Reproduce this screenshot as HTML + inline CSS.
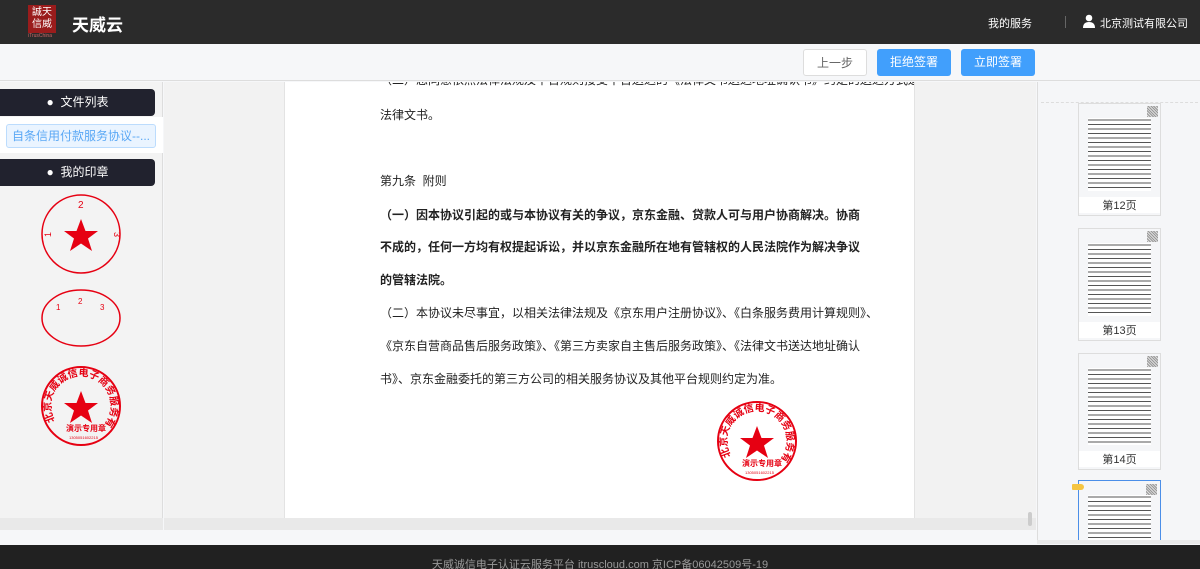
<!DOCTYPE html>
<html><head><meta charset="utf-8">
<style>
*{margin:0;padding:0;box-sizing:border-box}
html,body{width:1200px;height:569px;overflow:hidden}
body{background:#f6f7f9;font-family:"Liberation Sans","Noto Sans CJK SC",sans-serif;position:relative}
.abs{position:absolute}
#hdr{left:0;top:0;width:1200px;height:44px;background:#2b2b2b}
#tb{left:0;top:44px;width:1200px;height:37px;background:#f6f7f9;border-bottom:1px solid #ddd}
.btn{position:absolute;top:49px;height:27px;border-radius:3px;font-size:12px;line-height:27px;text-align:center}
#left{left:0;top:82px;width:163px;height:436px;background:#f3f3f3;border-right:1px solid #ddd}
.nav{position:absolute;left:0;width:155px;height:27px;background:#21222e;border-radius:0 4px 4px 0;color:#fff;font-size:12px;line-height:27px;text-align:center}
#mid{left:164px;top:82px;width:872px;height:436px;background:#f2f2f2}
#page{left:284px;top:82px;width:631px;height:436px;background:#fff;border-left:1px solid #e3e3e3;border-right:1px solid #e3e3e3;overflow:hidden}
.p{position:absolute;left:95px;font-size:12px;color:#222;white-space:nowrap}
.b{font-weight:bold}
#right{left:1037px;top:82px;width:163px;height:458px;background:#f5f6f8;border-left:1px solid #ddd;overflow:hidden}
.th{position:absolute;left:40px;width:83px;background:#fff;border:1px solid #ddd;
background-image:repeating-linear-gradient(#fff 0,#fff 2px,#555 2px,#555 3px,#fff 3px,#fff 4.5px);background-clip:content-box;padding:14px 9px 24px 9px}
.qr{position:absolute;right:2px;top:2px;width:11px;height:11px;background:repeating-linear-gradient(45deg,#999 0 1px,#ddd 1px 2px)}
.pl{position:absolute;bottom:2px;left:0;width:100%;text-align:center;font-size:11px;color:#333;background:#fff}
#foot{left:0;top:545px;width:1200px;height:24px;background:#212121;color:#999;font-size:11px;text-align:center;line-height:40px;overflow:hidden}
.sb{position:absolute;height:12px;background:#e9e9e9}
</style></head><body>
<div id="hdr" class="abs">
  <div class="abs" style="left:28px;top:5px;width:28px;height:28px;background:#9a1c1c;color:#fff;font-size:10px;line-height:12px;text-align:center;padding-top:2px">誠天<br>信威</div>
  <div class="abs" style="left:28px;top:33px;width:30px;font-size:5px;color:#c66">iTrusChina</div>
  <div class="abs" style="left:72px;top:11px;color:#fff;font-size:17px;font-weight:bold">天威云</div>
  <div class="abs" style="left:988px;top:15px;color:#fff;font-size:11px">我的服务</div>
  <div class="abs" style="left:1065px;top:16px;width:1px;height:12px;background:#666"></div>
  <svg class="abs" style="left:1083px;top:14px" width="12" height="14" viewBox="0 0 12 14"><circle cx="6" cy="4" r="3.3" fill="#fff"/><path d="M0 14 Q0 8 6 8 Q12 8 12 14Z" fill="#fff"/></svg>
  <div class="abs" style="left:1100px;top:15px;color:#fff;font-size:11px">北京测试有限公司</div>
</div>
<div id="tb" class="abs"></div>
<div class="btn" style="left:803px;width:64px;background:#fff;border:1px solid #ddd;color:#666">上一步</div>
<div class="btn" style="left:877px;width:74px;background:#419ffc;color:#fff">拒绝签署</div>
<div class="btn" style="left:961px;width:74px;background:#419ffc;color:#fff">立即签署</div>

<div id="left" class="abs">
  <div class="nav" style="top:7px">●&nbsp;&nbsp;文件列表</div>
  <div class="abs" style="left:0;top:35px;width:163px;height:36px;background:#fff"></div>
  <div class="abs" style="left:6px;top:42px;width:150px;height:24px;background:#eaf4ff;border:1px solid #bcdcfd;border-radius:3px;color:#5aa8f5;font-size:12px;line-height:22px;text-align:center">自条信用付款服务协议--...</div>
  <div class="nav" style="top:77px">●&nbsp;&nbsp;我的印章</div>
  <svg class="abs" style="left:40px;top:111px" width="82" height="82" viewBox="0 0 82 82"><circle cx="41" cy="41" r="39" fill="none" stroke="#e60012" stroke-width="1.5"/><polygon points="41,26 45.5,38 58,38 48,45.5 52,58 41,50.5 30,58 34,45.5 24,38 36.5,38" fill="#e60012"/><text x="38" y="15" font-size="10" fill="#e60012">2</text><text x="5" y="44" font-size="9" fill="#e60012" transform="rotate(-90 8 41)">1</text><text x="72" y="41" font-size="9" fill="#e60012" transform="rotate(90 74 41)">3</text></svg>
  <svg class="abs" style="left:40px;top:207px" width="82" height="60" viewBox="0 0 82 60"><ellipse cx="41" cy="29" rx="39" ry="28" fill="none" stroke="#e60012" stroke-width="1.5"/><text x="38" y="15" font-size="8" fill="#e60012">2</text><text x="16" y="21" font-size="8" fill="#e60012">1</text><text x="60" y="21" font-size="8" fill="#e60012">3</text></svg>
  <svg class="abs" style="left:40px;top:283px" width="82" height="82" viewBox="0 0 82 82"><defs><path id="arc1" d="M15 56 A30 30 0 1 1 67 56"/></defs><circle cx="41" cy="41" r="39" fill="none" stroke="#e60012" stroke-width="2"/><text font-size="10" font-weight="bold" fill="#e60012"><textPath href="#arc1">北京天威诚信电子商务服务有限公司</textPath></text><polygon points="41,26 45.5,38 58,38 48,45.5 52,58 41,50.5 30,58 34,45.5 24,38 36.5,38" fill="#e60012"/><text x="26" y="66" font-size="8" font-weight="bold" fill="#e60012">演示专用章</text><text x="29" y="74" font-size="4" fill="#e60012">1305051602215</text></svg>
</div>
<div class="sb" style="left:0;top:518px;width:163px"></div>
<div id="mid" class="abs"></div>
<div class="sb" style="left:164px;top:518px;width:872px"></div>
<div class="abs" style="left:1028px;top:512px;width:4px;height:14px;background:#ccc;border-radius:2px"></div>
<div id="page" class="abs">
  <div class="p" style="top:-11px">（二）您同意依照法律法规及平台规则接受平台送达的《法律文书送达地址确认书》约定的送达方式送达</div>
  <div class="p" style="top:24px">法律文书。</div>
  <div class="p" style="top:90px">第九条&nbsp;&nbsp;附则</div>
  <div class="p b" style="top:124px">（一）因本协议引起的或与本协议有关的争议，京东金融、贷款人可与用户协商解决。协商</div>
  <div class="p b" style="top:156px">不成的，任何一方均有权提起诉讼，并以京东金融所在地有管辖权的人民法院作为解决争议</div>
  <div class="p b" style="top:189px">的管辖法院。</div>
  <div class="p" style="top:222px">（二）本协议未尽事宜，以相关法律法规及《京东用户注册协议》、《白条服务费用计算规则》、</div>
  <div class="p" style="top:255px">《京东自营商品售后服务政策》、《第三方卖家自主售后服务政策》、《法律文书送达地址确认</div>
  <div class="p" style="top:288px">书》、京东金融委托的第三方公司的相关服务协议及其他平台规则约定为准。</div>
  <svg class="abs" style="left:431px;top:318px" width="82" height="82" viewBox="0 0 82 82"><defs><path id="arc2" d="M15 56 A30 30 0 1 1 67 56"/></defs><circle cx="41" cy="41" r="39" fill="none" stroke="#e60012" stroke-width="2"/><text font-size="10" font-weight="bold" fill="#e60012"><textPath href="#arc2">北京天威诚信电子商务服务有限公司</textPath></text><polygon points="41,26 45.5,38 58,38 48,45.5 52,58 41,50.5 30,58 34,45.5 24,38 36.5,38" fill="#e60012"/><text x="26" y="66" font-size="8" font-weight="bold" fill="#e60012">演示专用章</text><text x="29" y="74" font-size="4" fill="#e60012">1305051602215</text></svg>
</div>
<div id="right" class="abs">
  <div class="abs" style="left:3px;top:20px;width:157px;border-top:1px dashed #ddd"></div>
  <div class="th" style="top:21px;height:113px"><div class="qr"></div><div class="pl">第12页</div></div>
  <div class="th" style="top:146px;height:113px"><div class="qr"></div><div class="pl">第13页</div></div>
  <div class="th" style="top:271px;height:117px"><div class="qr"></div><div class="pl">第14页</div></div>
  <div class="th" style="top:398px;height:62px;border:1px solid #4a8ee8;padding-bottom:0"><div class="qr" style="top:3px;right:3px"></div></div>
  <div class="abs" style="left:34px;top:402px;width:12px;height:6px;background:#f5c542;border-radius:1px 3px 3px 1px"></div>
</div>
<div class="sb" style="left:1037px;top:540px;width:163px;height:4px"></div>
<div id="foot" class="abs">天威诚信电子认证云服务平台 itruscloud.com 京ICP备06042509号-19</div>
</body></html>
